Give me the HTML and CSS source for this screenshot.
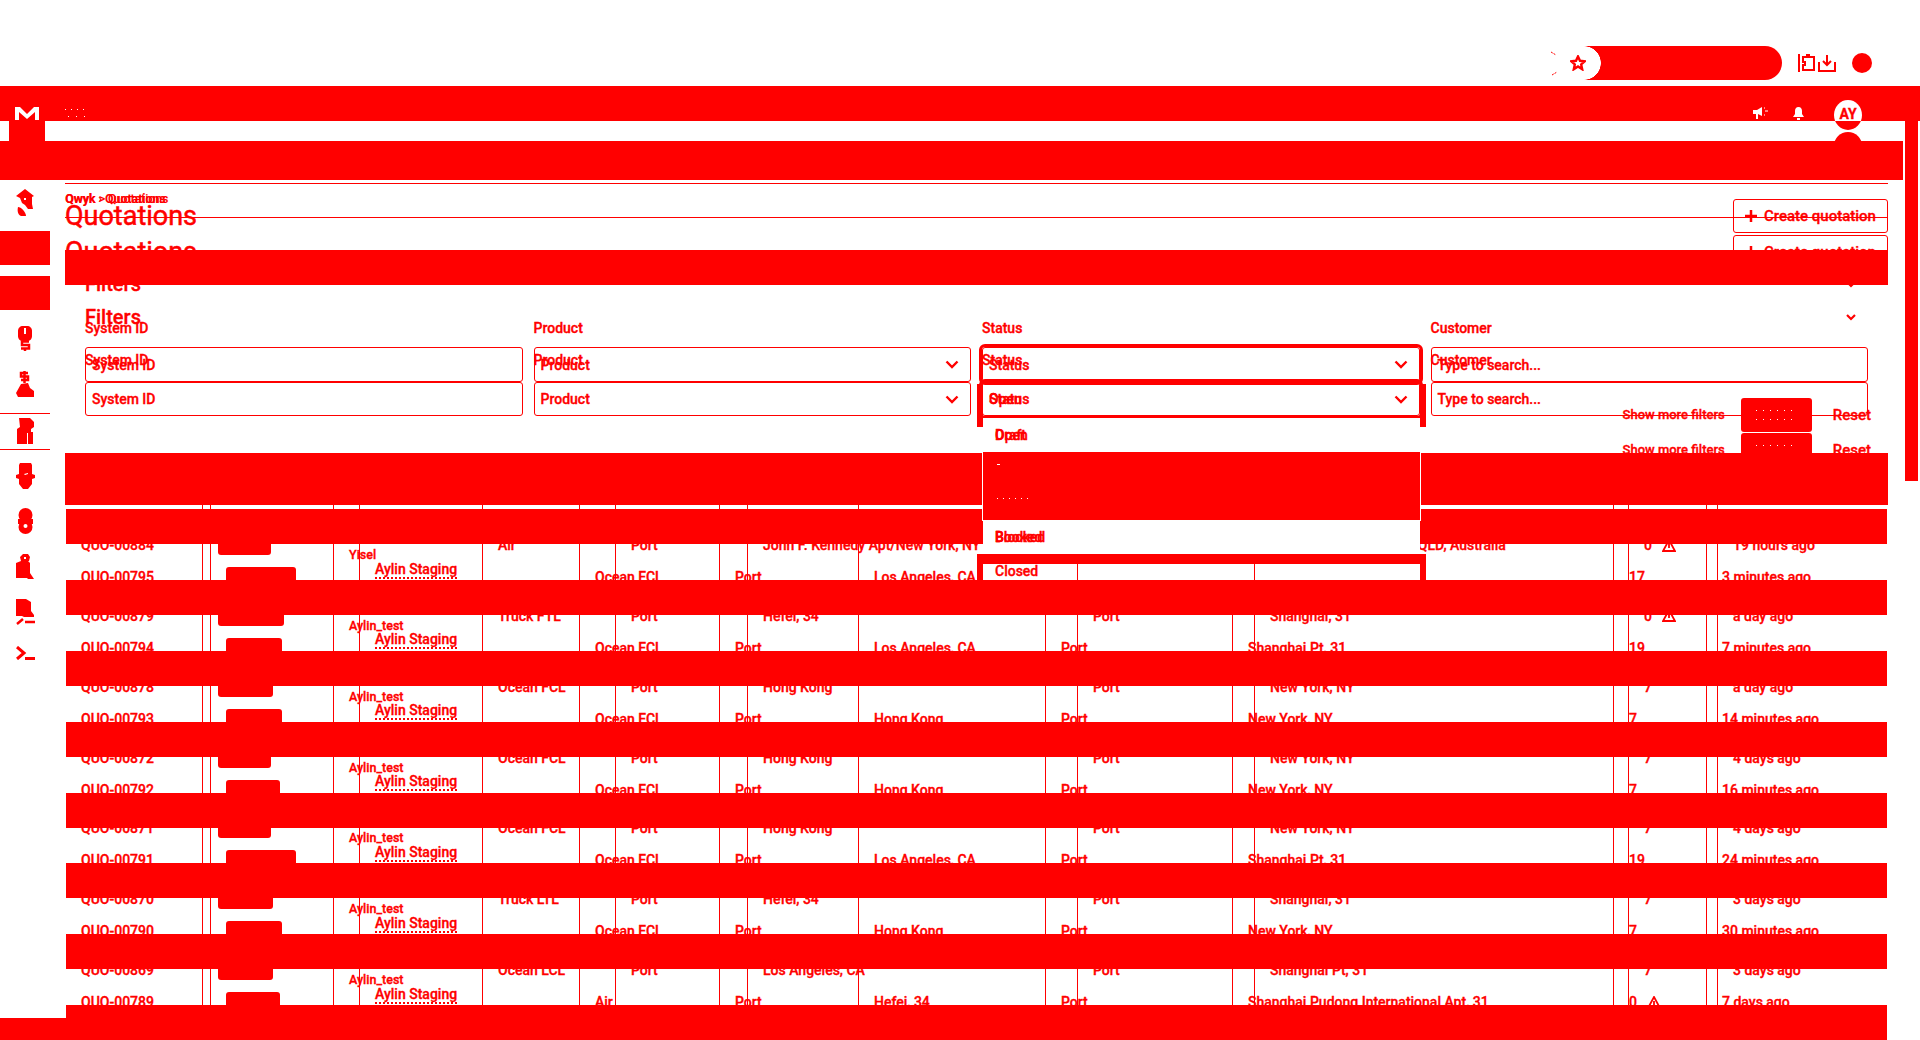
FILE: index.html
```html
<!DOCTYPE html>
<html lang="en">
<head>
<meta charset="utf-8">
<title>Quotations</title>
<link rel="stylesheet" href="styles.css">
</head>
<body>
<div class="browser">
  <svg class="arc" width="8" height="25" viewBox="0 0 8 25"><path d="M1 1l5 3M2 24l5-3"/></svg>
  <svg class="star" width="16" height="16" viewBox="0 0 16 16"><path d="M8 1.500l2 4.300 4.800.5-3.600 3.100 1 4.800L8 11.400l-4.200 2.800 1-4.800L1.200 6.300 6 5.800z"/></svg>
  <div class="omni"></div>
  <svg class="tool" width="18" height="18" viewBox="0 0 18 18"><path d="M1 0v18M5 3h4V1h2v2h5v13H5v-5h2V8H5z"/></svg>
  <svg class="tool" width="18" height="18" viewBox="0 0 18 18"><path d="M1 8v9h16V8M9 1v10M5 7l4 4 4-4"/></svg>
  <div class="dot"></div>
</div>

<header class="app-head">
  <div class="head-top">
    <svg class="logo" width="24" height="13" viewBox="0 0 24 13"><path d="M0 13V0h5l7 7 7-7h5v13h-4V5l-8 7-8-7v8z"/></svg>
    <div class="specks"></div>
    <svg class="head-icon" width="15" height="12" viewBox="0 0 15 12"><path d="M0 3h4l5-3v9L5 7v5H3V7H0z"/><path d="M11 1h1M12 4h3M11 8h1"/></svg>
    <svg class="head-icon bell" width="11" height="13" viewBox="0 0 11 13"><path d="M5.500 0C8 0 9 2 9 4v3l2 3H0l2-3V4c0-2 1-4 3.500-4zM4 11h3v2H4z"/></svg>
  </div>
  <div class="head-mid"><div class="logo-foot"></div></div>
  <div class="head-low"></div>
  <div class="avatar">AY</div>
  <div class="avatar-shade"></div>
  <div class="scrollbar"></div>
</header>

<div class="workspace">
  <nav class="sidebar">
    <div class="nav-cell"><svg width="18" height="27" viewBox="0 0 18 27"><path d="M9 0l9 7-2 1v7l1 5h-5l-3-4-3-2-2-5-4-2z"/><path class="hole" d="M8 9h2v2H8z"/><path d="M2 18c3 0 8 5 8 9H5c-3-1-4-5-3-9z"/></svg></div>
    <div class="nav-cell"><div class="nav-solid"></div></div>
    <div class="nav-cell"><div class="nav-solid"></div></div>
    <div class="nav-cell"><svg width="14" height="25" viewBox="0 0 14 25"><path d="M5 0h4c3 0 5 2 5 5v5c0 3-2 5-5 5H5c-3 0-5-2-5-5V5c0-3 2-5 5-5z"/><path class="hole" d="M6 2h2v6H6z"/><path class="line" d="M11 15.500H4v3.500h7v3.500H3M7 22v3"/></svg></div>
    <div class="nav-cell"><svg width="18" height="26" viewBox="0 0 18 26"><path class="line" d="M12 2H5v3.500h7V9H5M8.500 0v12"/><path d="M5 13l7-1 2 5 4 3v6H2l-2-4z"/></svg></div>
    <div class="nav-cell nav-ruled"><svg width="19" height="27" viewBox="0 0 19 27"><path d="M3 0h11l4 4v5l-3 2v3h2v12h-5V15h-1v11H1V11l3-2z"/></svg></div>
    <div class="nav-cell"><svg width="19" height="26" viewBox="0 0 19 26"><path d="M4 0h11l1 2v9l3 1v3l-3 1v5l-4 5H7l-4-5v-5l-3-1v-3l3-1V2z"/><path class="hole" d="M8 11l4-1v1l-3 1z"/></svg></div>
    <div class="nav-cell"><svg width="15" height="27" viewBox="0 0 15 27"><circle cx="7.500" cy="7" r="7"/><circle cx="7.500" cy="19" r="7"/><path d="M0 11h15v5H0z"/><circle class="hole" cx="7.500" cy="18" r="2"/></svg></div>
    <div class="nav-cell"><svg width="18" height="27" viewBox="0 0 18 27"><path d="M7 0h5l2 3-1 4h-1l2 2v10l4 6h-6l-1-1H0V9l5-2-1-4z"/><path class="hole" d="M8 3h2v2H8z"/></svg></div>
    <div class="nav-cell"><svg width="19" height="26" viewBox="0 0 19 26"><path d="M0 0h10l5 3v9l3 4v2H8l-2-1H0z"/><path class="line" d="M1 25l6-5M9 23h10"/></svg></div>
    <div class="nav-cell nav-last"><svg width="19" height="14" viewBox="0 0 19 14"><path class="line thick" d="M1 1l7 6-7 6M9 12.500h10"/></svg></div>
    <div class="nav-foot"></div>
  </nav>

  <main class="stage">
    <section class="state state-a">
      <div class="rule"></div>
      <div class="head">
        <div class="head-text">
          <div class="crumb">Qwyk › Quotations</div>
          <h1 class="title title-a">Quotations</h1>
        </div>
        <div class="create">
          <svg width="12" height="12" viewBox="0 0 12 12"><path d="M6 0v12M0 6h12"/></svg>
          Create quotation
        </div>
      </div>
      <div class="filter-head filter-head-a">
        <span class="filter-title">Filters</span>
        <svg class="chev-small" width="10" height="7" viewBox="0 0 10 7"><path d="M1 1l4 4 4-4"/></svg>
      </div>
      <div class="fields fields-a">
        <div class="field"><div class="label">System ID</div><div class="box">System ID</div></div>
        <div class="field"><div class="label">Product</div><div class="box">Product<svg class="chev" width="14" height="9" viewBox="0 0 14 9"><path d="M1.500 1.500L7 7l5.500-5.500"/></svg></div></div>
        <div class="field"><div class="label">Status</div><div class="box focus">Status<svg class="chev" width="14" height="9" viewBox="0 0 14 9"><path d="M1.500 1.500L7 7l5.500-5.500"/></svg></div></div>
        <div class="field"><div class="label">Customer</div><div class="box">Type to search...</div></div>
      </div>
      <div class="actions actions-a">
        <span class="more">Show more filters</span>
        <div class="search"><div class="search-dots"></div></div>
        <span class="reset">Reset</span>
      </div>
      <div class="table table-a">
        <div class="row row-head"><i class="c"></i><i class="c"></i><i class="c"></i><i class="c"></i><i class="c"></i><i class="c"></i><i class="c"></i><i class="c"></i><i class="c"></i><i class="c"></i></div>
        <div class="row"><span class="c">QUO-00884</span><span class="c"><b class="pill w53"></b></span><span class="c who">Yisel</span><span class="c">Air</span><span class="c">Port</span><span class="c">John F. Kennedy Apt/New York, NY</span><span class="c">Port</span><span class="c">Brisbane Apt/Brisbane, QLD, Australia</span><span class="c">0 <svg class="warn" width="14" height="13" viewBox="0 0 14 13"><path d="M7 1l6 11H1zM7 5v4"/></svg></span><span class="c">19 hours ago</span></div>
        <div class="row"><span class="c">QUO-00879</span><span class="c"><b class="pill w66"></b></span><span class="c who">Aylin_test</span><span class="c">Truck FTL</span><span class="c">Port</span><span class="c">Hefei, 34</span><span class="c">Port</span><span class="c">Shanghai, 31</span><span class="c">0 <svg class="warn" width="14" height="13" viewBox="0 0 14 13"><path d="M7 1l6 11H1zM7 5v4"/></svg></span><span class="c">a day ago</span></div>
        <div class="row"><span class="c">QUO-00878</span><span class="c"><b class="pill w55"></b></span><span class="c who">Aylin_test</span><span class="c">Ocean FCL</span><span class="c">Port</span><span class="c">Hong Kong</span><span class="c">Port</span><span class="c">New York, NY</span><span class="c">7</span><span class="c">a day ago</span></div>
        <div class="row"><span class="c">QUO-00872</span><span class="c"><b class="pill w53"></b></span><span class="c who">Aylin_test</span><span class="c">Ocean FCL</span><span class="c">Port</span><span class="c">Hong Kong</span><span class="c">Port</span><span class="c">New York, NY</span><span class="c">7</span><span class="c">4 days ago</span></div>
        <div class="row"><span class="c">QUO-00871</span><span class="c"><b class="pill w53"></b></span><span class="c who">Aylin_test</span><span class="c">Ocean FCL</span><span class="c">Port</span><span class="c">Hong Kong</span><span class="c">Port</span><span class="c">New York, NY</span><span class="c">7</span><span class="c">4 days ago</span></div>
        <div class="row"><span class="c">QUO-00870</span><span class="c"><b class="pill w55"></b></span><span class="c who">Aylin_test</span><span class="c">Truck LTL</span><span class="c">Port</span><span class="c">Hefei, 34</span><span class="c">Port</span><span class="c">Shanghai, 31</span><span class="c">7</span><span class="c">3 days ago</span></div>
        <div class="row"><span class="c">QUO-00869</span><span class="c"><b class="pill w55"></b></span><span class="c who">Aylin_test</span><span class="c">Ocean LCL</span><span class="c">Port</span><span class="c">Los Angeles, CA</span><span class="c">Port</span><span class="c">Shanghai Pt, 31</span><span class="c">7</span><span class="c">3 days ago</span></div>
      </div>
    </section>

    <section class="state state-b">
      <div class="crumb crumb-b">Qwyk &gt; Quotations</div>
      <div class="rule rule-b"></div>
      <div class="head head-b">
        <h1 class="title">Quotations</h1>
        <div class="create">
          <svg width="12" height="12" viewBox="0 0 12 12"><path d="M6 0v12M0 6h12"/></svg>
          Create quotation
        </div>
      </div>
      <div class="filter-head filter-head-b">
        <span class="filter-title">Filters</span>
        <svg class="chev-small" width="10" height="7" viewBox="0 0 10 7"><path d="M1 1l4 4 4-4"/></svg>
      </div>
      <div class="fields fields-b">
        <div class="field"><div class="label">System ID</div><div class="box">System ID</div></div>
        <div class="field"><div class="label">Product</div><div class="box">Product<svg class="chev" width="14" height="9" viewBox="0 0 14 9"><path d="M1.500 1.500L7 7l5.500-5.500"/></svg></div></div>
        <div class="field"><div class="label">Status</div><div class="box focus"><span class="stack"><span>Status</span><span>Open</span></span><svg class="chev" width="14" height="9" viewBox="0 0 14 9"><path d="M1.500 1.500L7 7l5.500-5.500"/></svg></div></div>
        <div class="field"><div class="label">Customer</div><div class="box">Type to search...</div></div>
      </div>
      <div class="actions actions-b">
        <span class="more">Show more filters</span>
        <div class="search"><div class="search-dots"></div></div>
        <span class="reset">Reset</span>
      </div>
      <div class="table table-b">
        <div class="row row-head"><i class="c"></i><i class="c"></i><i class="c"></i><i class="c"></i><i class="c"></i><i class="c"></i><i class="c bare"></i><i class="c bare"></i><i class="c"></i><i class="c"></i></div>
        <div class="row"><span class="c">QUO-00795</span><span class="c"><b class="pill w70"></b></span><span class="c owner"><u>Aylin Staging</u></span><span class="c">Ocean FCL</span><span class="c">Port</span><span class="c">Los Angeles, CA</span><span class="c bare"></span><span class="c bare"></span><span class="c">17</span><span class="c">3 minutes ago</span></div>
        <div class="row"><span class="c">QUO-00794</span><span class="c"><b class="pill w56"></b></span><span class="c owner"><u>Aylin Staging</u></span><span class="c">Ocean FCL</span><span class="c">Port</span><span class="c">Los Angeles, CA</span><span class="c">Port</span><span class="c">Shanghai Pt, 31</span><span class="c">19</span><span class="c">7 minutes ago</span></div>
        <div class="row"><span class="c">QUO-00793</span><span class="c"><b class="pill w56"></b></span><span class="c owner"><u>Aylin Staging</u></span><span class="c">Ocean FCL</span><span class="c">Port</span><span class="c">Hong Kong</span><span class="c">Port</span><span class="c">New York, NY</span><span class="c">7</span><span class="c">14 minutes ago</span></div>
        <div class="row"><span class="c">QUO-00792</span><span class="c"><b class="pill w54"></b></span><span class="c owner"><u>Aylin Staging</u></span><span class="c">Ocean FCL</span><span class="c">Port</span><span class="c">Hong Kong</span><span class="c">Port</span><span class="c">New York, NY</span><span class="c">7</span><span class="c">16 minutes ago</span></div>
        <div class="row"><span class="c">QUO-00791</span><span class="c"><b class="pill w70"></b></span><span class="c owner"><u>Aylin Staging</u></span><span class="c">Ocean FCL</span><span class="c">Port</span><span class="c">Los Angeles, CA</span><span class="c">Port</span><span class="c">Shanghai Pt, 31</span><span class="c">19</span><span class="c">24 minutes ago</span></div>
        <div class="row"><span class="c">QUO-00790</span><span class="c"><b class="pill w56"></b></span><span class="c owner"><u>Aylin Staging</u></span><span class="c">Ocean FCL</span><span class="c">Port</span><span class="c">Hong Kong</span><span class="c">Port</span><span class="c">New York, NY</span><span class="c">7</span><span class="c">30 minutes ago</span></div>
        <div class="row"><span class="c">QUO-00789</span><span class="c"><b class="pill w54"></b></span><span class="c owner"><u>Aylin Staging</u></span><span class="c">Air</span><span class="c">Port</span><span class="c">Hefei, 34</span><span class="c">Port</span><span class="c">Shanghai Pudong International Apt, 31</span><span class="c">0 <svg class="warn" width="14" height="13" viewBox="0 0 14 13"><path d="M7 1l6 11H1zM7 5v4"/></svg></span><span class="c">7 days ago</span></div>
      </div>
    </section>

    <section class="state bands">
      <div class="band band-card"></div>
      <div class="band band-head"></div>
      <div class="band band-sub"></div>
      <div class="band-rows">
        <div class="band"></div>
        <div class="band"></div>
        <div class="band"></div>
        <div class="band"></div>
        <div class="band"></div>
        <div class="band"></div>
        <div class="band"></div>
      </div>
    </section>

    <div class="menu">
      <div class="menu-item menu-first"><span class="stack"><span>Draft</span><span>Open</span></span></div>
      <div class="menu-active"><div class="tick"></div><div class="tick tick-long"></div></div>
      <div class="menu-item"><span class="stack"><span>Blocked</span><span>Booked</span></span></div>
      <div class="menu-foot">Closed</div>
    </div>
  </main>
</div>
</body>
</html>
```

FILE: styles.css
```css
* { box-sizing: border-box; }

html, body {
  margin: 0;
  width: 1920px;
  height: 1040px;
  overflow: hidden;
  background: #fff;
}

body {
  font-family: Roboto, "Liberation Sans", sans-serif;
  font-size: 14px;
  font-weight: 500;
  line-height: 16px;
  color: #f00;
  white-space: nowrap;
  -webkit-text-stroke: 0.35px #f00;
}

svg { display: block; flex: none; fill: #f00; }
.line { fill: none; stroke: #f00; stroke-width: 2.500; }
.thick { stroke-width: 3; }
.hole { fill: #fff; }

/* browser toolbar */
.browser {
  height: 86px;
  padding: 46px 48px 0 0;
  display: flex;
  justify-content: flex-end;
  align-items: flex-start;
}
.arc { margin: 5px 12px 0 0; fill: none; stroke: #f00; stroke-width: 1; stroke-dasharray: 2 1; }
.star { margin-top: 9px; fill: none; stroke: #f00; stroke-width: 2.400; }
.omni {
  width: 198px;
  height: 34px;
  margin: 0 16px 0 -2px;
  border-radius: 0 17px 17px 0;
  background: radial-gradient(circle 17px at 0 50%, transparent 97%, #f00 100%);
}
.tool { margin: 8px 2px 0 0; fill: none; stroke: #f00; stroke-width: 2; }
.dot { width: 20px; height: 20px; margin: 7px 0 0 14px; border-radius: 50%; background: #f00; }

/* app header */
.app-head { position: relative; height: 94px; }
.head-top {
  height: 35px;
  background: #f00;
  display: flex;
  align-items: flex-start;
  padding: 21px 0 0 15px;
}
.logo { fill: #fff; }
.specks {
  width: 22px;
  height: 8px;
  margin: 2px 0 0 26px;
  background:
    repeating-linear-gradient(90deg, #fff 0 1px, transparent 1px 6px) 0 0 / 100% 1px no-repeat,
    repeating-linear-gradient(90deg, #fff 0 1px, transparent 1px 8px) 3px 100% / 100% 1px no-repeat;
}
.head-icon { margin-left: 1666px; fill: #fff; }
.head-icon path + path { fill: none; stroke: #fff; }
.bell { margin-left: 25px; }
.head-mid { height: 20px; padding-left: 9px; }
.logo-foot { width: 36px; height: 20px; background: #f00; }
.head-low { height: 39px; width: 1903px; background: #f00; }
.avatar {
  position: absolute;
  left: 1834px;
  top: 14px;
  width: 28px;
  height: 30px;
  border-radius: 50%;
  background: linear-gradient(#fff 21px, #f00 21px);
  text-align: center;
  font-size: 14px;
  font-weight: 700;
  line-height: 28px;
}
.avatar-shade {
  position: absolute;
  left: 1834px;
  top: 46px;
  width: 28px;
  height: 28px;
  border-radius: 50%;
  background: #f00;
}
.scrollbar {
  position: absolute;
  left: 1905px;
  top: 35px;
  width: 13px;
  height: 360px;
  background: #f00;
}

/* workspace */
.workspace {
  display: grid;
  grid-template-columns: 50px 1870px;
  height: 860px;
}
.sidebar { display: flex; flex-direction: column; align-items: flex-start; height: 860px; }
.nav-cell {
  width: 50px;
  height: 45.300px;
  flex: none;
  display: flex;
  align-items: center;
  justify-content: center;
}
.nav-solid { width: 50px; height: 34px; background: #f00; }
.nav-ruled { position: relative; margin-top: 2px; }
.nav-ruled::before {
  content: "";
  position: absolute;
  left: 0;
  right: 0;
  top: 5px;
  height: 35px;
  border-top: 1px solid #f00;
  border-bottom: 1px solid #f00;
}
.nav-last { margin-top: -5px; }
.nav-foot { margin-top: auto; width: 66px; height: 22px; background: #f00; flex: none; }

/* overlaid page states */
.stage {
  position: relative;
  display: grid;
  height: 860px;
  overflow: hidden;
}
.state { grid-area: 1 / 1; height: 860px; overflow: hidden; }

.rule { height: 1px; margin: 3px 32px 0 15px; background: #f00; }
.head {
  display: flex;
  justify-content: space-between;
  align-items: flex-start;
  margin: 7px 32px 0 15px;
  height: 42px;
}
.head-text { display: flex; flex-direction: column; }
.crumb { height: 16px; font-size: 12.500px; font-weight: 700; letter-spacing: -0.100px; -webkit-text-stroke: 0; }
.title { margin: 0; font-size: 27px; font-weight: 400; line-height: 18px; -webkit-text-stroke: 0.5px #f00; }
.create {
  width: 155px;
  height: 34px;
  margin-top: 8px;
  display: flex;
  align-items: center;
  gap: 7px;
  padding-left: 11px;
  border: 1px solid #f00;
  border-radius: 3px;
  font-size: 15px;
}
.create svg path { fill: none; stroke: #f00; stroke-width: 2.500; }

.filter-head {
  display: flex;
  justify-content: space-between;
  align-items: center;
  height: 20px;
  padding: 0 64px 0 35px;
}
.filter-head-a { margin-top: 41px; }
.filter-title { font-size: 20px; line-height: 20px; }
.chev-small { fill: none; stroke: #f00; stroke-width: 2.200; }

.fields {
  display: grid;
  grid-template-columns: repeat(4, 1fr);
  column-gap: 11px;
  width: 1783px;
  margin-left: 35px;
}
.fields-a { margin-top: 26px; }
.label { height: 16px; }
.box {
  display: flex;
  justify-content: space-between;
  align-items: center;
  padding: 0 11px 0 6px;
  border: 1px solid #f00;
  border-radius: 3px;
}
.fields-a .box { margin-top: 11px; height: 35px; }
.fields-b .box { margin-top: 14px; height: 34px; }
.chev { fill: none; stroke: #f00; stroke-width: 2.400; }
.focus { outline: 3px solid #f00; }
.stack { display: inline-grid; }
.stack > * { grid-area: 1 / 1; }

.actions {
  display: flex;
  justify-content: flex-end;
  align-items: center;
  padding-right: 49px;
  gap: 16px;
}
.actions-a { margin-top: 16px; height: 34px; }
.actions-b { margin-top: 17px; height: 34px; }
.more { font-size: 13px; }
.search {
  width: 71px;
  height: 34px;
  border-radius: 3px;
  background: #f00;
  display: flex;
  align-items: center;
  justify-content: center;
}
.search-dots {
  width: 40px;
  height: 10px;
  background:
    repeating-linear-gradient(90deg, #fff 0 1px, transparent 1px 7px) 0 0 / 100% 1px no-repeat,
    repeating-linear-gradient(90deg, #fff 0 1px, transparent 1px 7px) 0 100% / 100% 1px no-repeat;
}
.reset { margin-left: 5px; font-size: 15px; }

/* state B offsets */
.crumb-b { margin: 11px 0 0 15.500px; font-weight: 500; }
.rule-b { margin-top: 10px; }
.head-b { margin-top: 17px; height: 34px; align-items: center; }
.head-b .title { line-height: 34px; padding-bottom: 2px; height: 34px; }
.head-b .create { margin-top: 0; }
.filter-head-b { margin-top: 38px; }
.fields-b { margin-top: 25px; }

/* tables */
.table { margin-left: 16px; }
.table-a { margin-top: 72px; }
.table-b { margin-top: 38px; }
.row { display: grid; height: 70.850px; }
.table-a .row { grid-template-columns: 136px 131px 149px 133px 132px 330px 177px 374px 89px 170px; }
.table-b .row { grid-template-columns: 144px 149px 220px 140px 139px 187px 187px 381px 93px 181px; }
.table-a .row-head { height: 5.600px; }
.table-b .row-head { height: 36.600px; }
.c {
  display: flex;
  align-items: center;
  gap: 5px;
  padding-left: 15px;
  border-left: 1px solid #f00;
  min-width: 0;
}
.c:first-child { border-left: 0; }
.bare { border-left: 0; }
.who { padding-top: 20px; font-size: 12.500px; }
.owner { padding-bottom: 14px; }
.owner u { text-decoration: none; border-bottom: 2px dotted #f00; line-height: 15px; }
.pill { display: block; height: 20px; border-radius: 3px; background: #f00; }
.w53 { width: 53px; }
.w54 { width: 54px; }
.w55 { width: 55px; }
.w56 { width: 56px; }
.w66 { width: 66px; }
.w70 { width: 70px; }
.warn { margin-left: 5px; fill: none; stroke: #f00; stroke-width: 1.800; }

/* solid bands */
.bands { display: flex; flex-direction: column; align-items: flex-start; }
.band { height: 35px; width: 1821px; margin-left: 16px; background: #f00; flex: none; }
.band-card, .band-head { width: 1823px; margin-left: 15px; }
.band-card { margin-top: 70px; }
.band-head { margin-top: 168px; height: 52px; }
.band-sub { margin-top: 4px; }
.band-rows { display: flex; flex-direction: column; gap: 35.850px; margin-top: 36px; }

/* status dropdown */
.menu {
  position: absolute;
  left: 927px;
  top: 238px;
  width: 449px;
  padding: 0 6px;
  display: flex;
  flex-direction: column;
}
.menu::before, .menu::after {
  content: "";
  position: absolute;
  top: -34px;
  width: 6px;
  height: 43px;
  background: #f00;
}
.menu::before { left: 0; }
.menu::after { right: 0; }
.menu-item { height: 34px; padding-left: 12px; display: flex; align-items: center; background: #fff; }
.menu-active { height: 68px; padding: 12px 0 0 14px; background: #f00; box-shadow: 0 0 0 1px #fff; }
.tick { width: 3px; height: 1px; background: #fff; }
.tick-long {
  width: 34px;
  height: 1px;
  margin-top: 33px;
  background: repeating-linear-gradient(90deg, #fff 0 1px, transparent 1px 6px);
}
.menu-foot {
  margin: 0 -6px;
  height: 26px;
  padding-left: 12px;
  border: solid #f00;
  border-width: 10px 6px 0;
  line-height: 14px;
}
```
